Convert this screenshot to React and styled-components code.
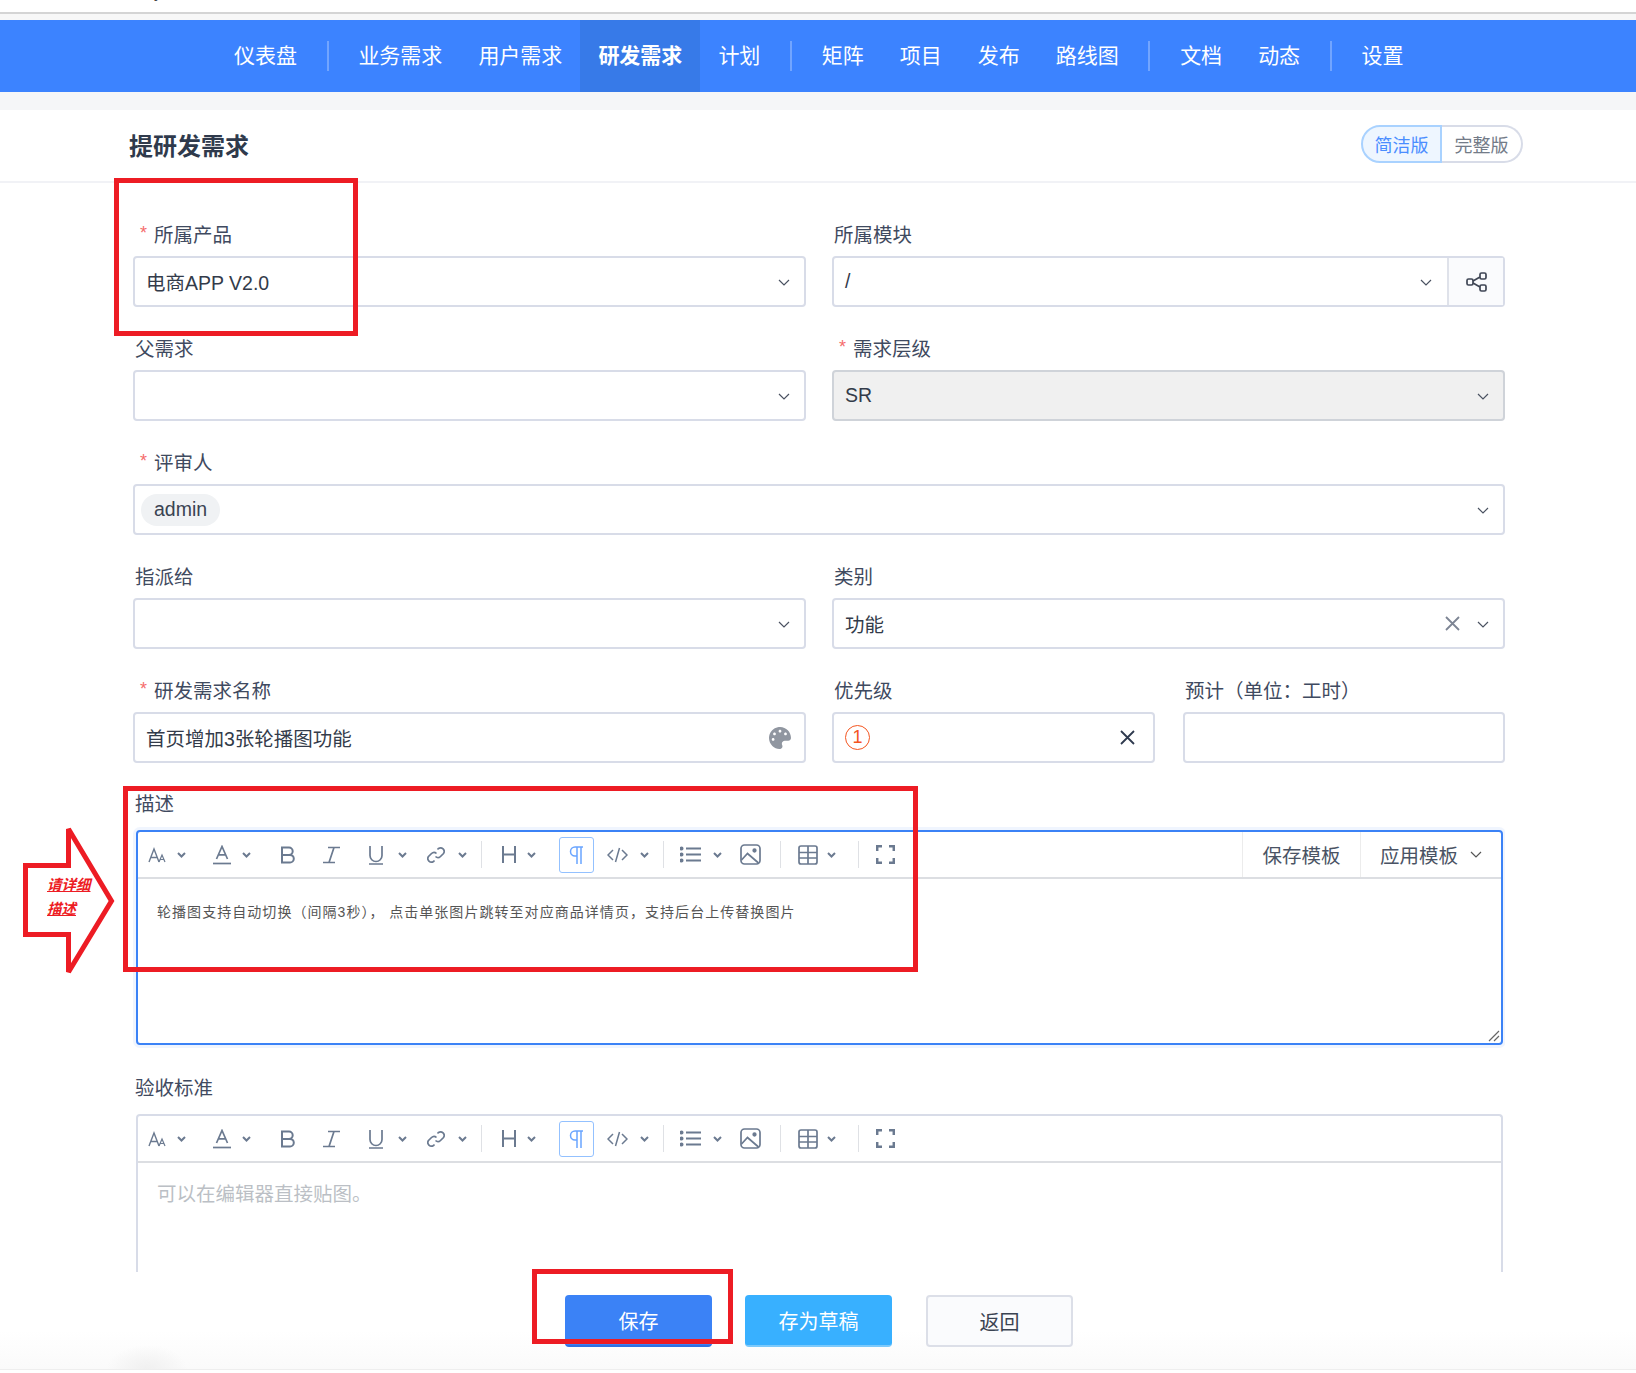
import styled, { createGlobalStyle } from "styled-components"
import { FaPalette } from "react-icons/fa"

const navItems = [
    { text: "仪表盘" },
    { divider: true },
    { text: "业务需求" },
    { text: "用户需求" },
    { text: "研发需求", active: true },
    { text: "计划" },
    { divider: true },
    { text: "矩阵" },
    { text: "项目" },
    { text: "发布" },
    { text: "路线图" },
    { divider: true },
    { text: "文档" },
    { text: "动态" },
    { divider: true },
    { text: "设置" },
]

const Svg = ({ w, h, children, ...rest }) => (
    <svg width={w} height={h} viewBox={`0 0 ${w} ${h}`} fill="none" stroke="currentColor" strokeWidth="1.7" {...rest}>
        {children}
    </svg>
)

const ChevronThin = () => (
    <Svg w={12} h={7} strokeWidth="1.2"><path d="M1 1l5 5 5-5" /></Svg>
)
const ChevronBold = ({ w = 9 }) => (
    <Svg w={w} h={6} strokeWidth="2"><path d={`M1 1l${w / 2 - 1} 3.5L${w - 1} 1`} /></Svg>
)
const FontSize = () => (
    <Svg w={18} h={16} strokeWidth="1.4">
        <path d="M1 15L6 2l5 13M2.800 10.500h6.500" />
        <path d="M11 15l3-7 3 7M12 12.500h4" strokeWidth="1.200" />
    </Svg>
)
const FontColor = () => (
    <Svg w={18} h={20}>
        <path d="M3.500 14L9 1.500 14.500 14M5.300 9.800h7.400" />
        <path d="M0 18.500h18" />
    </Svg>
)
const Bold = () => (
    <Svg w={16} h={18} strokeWidth="2">
        <path d="M2 1.500h7a3.700 3.700 0 0 1 0 7.400H2zM2 8.900h8a3.800 3.800 0 0 1 0 7.600H2z" />
    </Svg>
)
const Italic = () => (
    <Svg w={17} h={18}>
        <path d="M5 1.500h12M0 16.500h12M11 1.500L6 16.500" />
    </Svg>
)
const Underline = () => (
    <Svg w={14} h={20}>
        <path d="M1 1v9.500a6 6 0 0 0 12 0V1M0 19h14" />
    </Svg>
)
const LinkIcon = () => (
    <Svg w={18} h={18}>
        <path d="M10.500 3.500l1-1a3.600 3.600 0 0 1 5 5l-3 3a3.600 3.600 0 0 1-5 0" />
        <path d="M7.500 14.500l-1 1a3.600 3.600 0 0 1-5-5l3-3a3.600 3.600 0 0 1 5 0" />
    </Svg>
)
const Heading = () => (
    <Svg w={14} h={17} strokeWidth="2">
        <path d="M1 0v17M13 0v17M1 8.500h12" />
    </Svg>
)
const Pilcrow = () => (
    <Svg w={15} h={18} strokeWidth="1.500" stroke="#6aa5ff">
        <path d="M14 1H6a4.500 4.500 0 0 0 0 9h2M8 1v17M12 1v17" />
    </Svg>
)
const Code = () => (
    <Svg w={21} h={16} strokeWidth="1.500">
        <path d="M6 3L1 8l5 5M15 3l5 5-5 5M12.500 1L8.500 15" />
    </Svg>
)
const ListIcon = () => (
    <Svg w={21} h={17}>
        <path d="M6 2.500h15M6 8.500h15M6 14.500h15" strokeWidth="2" />
        <circle cx="1.500" cy="2.500" r="1.200" fill="currentColor" />
        <circle cx="1.500" cy="8.500" r="1.200" fill="currentColor" />
        <circle cx="1.500" cy="14.500" r="1.200" fill="currentColor" />
    </Svg>
)
const ImageIcon = () => (
    <Svg w={21} h={21}>
        <rect x="1" y="1" width="19" height="19" rx="3.500" />
        <path d="M1.500 16l6-6.500 11 9.500" />
        <circle cx="14.500" cy="6.500" r="1.300" fill="currentColor" />
    </Svg>
)
const TableIcon = () => (
    <Svg w={20} h={20}>
        <rect x="1" y="1" width="18" height="18" rx="2" />
        <path d="M1 7.500h18M1 13h18M10 1v18" />
    </Svg>
)
const FullScreen = () => (
    <Svg w={19} h={19} strokeWidth="2.500">
        <path d="M1.200 6V1.200H6M13 1.200h4.800V6M17.800 13v4.800H13M6 17.800H1.200V13" />
    </Svg>
)
const ShareNodes = () => (
    <Svg w={21} h={20} strokeWidth="1.700">
        <rect x="1" y="7" width="6" height="6" rx="1.500" />
        <rect x="14" y="1" width="6" height="6" rx="1.500" />
        <rect x="14" y="13" width="6" height="6" rx="1.500" />
        <path d="M7 9l7-4M7 11l7 4" />
    </Svg>
)
const Cross = ({ size = 15, weight = 1.800 }) => (
    <Svg w={size} h={size} strokeWidth={weight}>
        <path d={`M1 1l${size - 2} ${size - 2}M${size - 1} 1L1 ${size - 1}`} />
    </Svg>
)

const tools = [
    { icon: <FontSize />, gap: 10 },
    { icon: <ChevronBold />, gap: 11 },
    { icon: <FontColor />, gap: 27 },
    { icon: <ChevronBold />, gap: 11 },
    { icon: <Bold />, gap: 29 },
    { icon: <Italic />, gap: 27 },
    { icon: <Underline />, gap: 29 },
    { icon: <ChevronBold />, gap: 15 },
    { icon: <LinkIcon />, gap: 20 },
    { icon: <ChevronBold />, gap: 13 },
    { divider: true, gap: 14 },
    { icon: <Heading />, gap: 20 },
    { icon: <ChevronBold />, gap: 11 },
    { icon: <Pilcrow />, gap: 23, active: true },
    { icon: <Code />, gap: 13 },
    { icon: <ChevronBold />, gap: 12 },
    { divider: true, gap: 14 },
    { icon: <ListIcon />, gap: 16 },
    { icon: <ChevronBold />, gap: 12 },
    { icon: <ImageIcon />, gap: 18 },
    { divider: true, gap: 19 },
    { icon: <TableIcon />, gap: 17 },
    { icon: <ChevronBold />, gap: 9 },
    { divider: true, gap: 22 },
    { icon: <FullScreen />, gap: 17 },
]

function Toolbar({ children }) {
    return (
        <ToolbarRow>
            {tools.map((tool, i) =>
                tool.divider ? (
                    <ToolDivider key={i} $gap={tool.gap} />
                ) : tool.active ? (
                    <ParagraphButton key={i} $gap={tool.gap}>{tool.icon}</ParagraphButton>
                ) : (
                    <ToolIcon key={i} $gap={tool.gap}>{tool.icon}</ToolIcon>
                )
            )}
            {children}
        </ToolbarRow>
    )
}

function Field({ label, required, children }) {
    return (
        <div>
            <Label>
                {required && <Star>*</Star>}
                {label}
            </Label>
            {children}
        </div>
    )
}

function App() {
    return (
        <Page>
            <GlobalStyle />
            <TopStrip><TopText>y</TopText></TopStrip>
            <Nav>
                {navItems.map((item, i) =>
                    item.divider ? (
                        <NavDivider key={i} />
                    ) : (
                        <NavItem key={i} $active={item.active}>{item.text}</NavItem>
                    )
                )}
            </Nav>
            <Band />

            <Header>
                <Title>提研发需求</Title>
                <Toggle>
                    <ToggleOption $active>简洁版</ToggleOption>
                    <ToggleOption>完整版</ToggleOption>
                </Toggle>
            </Header>

            <Form>
                <Row>
                    <Field label="所属产品" required>
                        <Select>
                            <Value>电商APP V2.0</Value>
                            <Arrow><ChevronThin /></Arrow>
                        </Select>
                    </Field>
                    <Field label="所属模块">
                        <Select>
                            <Value>/</Value>
                            <Arrow $right={37}><ChevronThin /></Arrow>
                            <Addon><ShareNodes /></Addon>
                        </Select>
                    </Field>
                </Row>
                <Row>
                    <Field label="父需求">
                        <Select>
                            <Value />
                            <Arrow><ChevronThin /></Arrow>
                        </Select>
                    </Field>
                    <Field label="需求层级" required>
                        <Select $disabled>
                            <Value>SR</Value>
                            <Arrow><ChevronThin /></Arrow>
                        </Select>
                    </Field>
                </Row>
                <Field label="评审人" required>
                    <Select>
                        <Tag>admin</Tag>
                        <Value />
                        <Arrow><ChevronThin /></Arrow>
                    </Select>
                </Field>
                <Row>
                    <Field label="指派给">
                        <Select>
                            <Value />
                            <Arrow><ChevronThin /></Arrow>
                        </Select>
                    </Field>
                    <Field label="类别">
                        <Select>
                            <Value>功能</Value>
                            <ClearIcon $tone="#7d8594" $right={17}><Cross /></ClearIcon>
                            <Arrow><ChevronThin /></Arrow>
                        </Select>
                    </Field>
                </Row>
                <Row>
                    <Field label="研发需求名称" required>
                        <Select>
                            <Value>首页增加3张轮播图功能</Value>
                            <PaletteIcon><FaPalette /></PaletteIcon>
                        </Select>
                    </Field>
                    <SubRow>
                        <Field label="优先级">
                            <Select>
                                <Value><PriorityBadge>1</PriorityBadge></Value>
                                <ClearIcon $tone="#2f3a4f" $right={18}><Cross /></ClearIcon>
                            </Select>
                        </Field>
                        <Field label="预计（单位：工时）">
                            <Select />
                        </Field>
                    </SubRow>
                </Row>

                <EditorBlock $top={-1}>
                    <Label>描述</Label>
                    <Editor $focused $height={215}>
                        <Toolbar>
                            <TemplateArea>
                                <TemplateButton $width={118}>保存模板</TemplateButton>
                                <TemplateButton $width={141}>
                                    应用模板
                                    <ChevronThin />
                                </TemplateButton>
                            </TemplateArea>
                        </Toolbar>
                        <EditorBody>轮播图支持自动切换（间隔3秒），{"\u2005"}点击单张图片跳转至对应商品详情页，支持后台上传替换图片</EditorBody>
                        <ResizeHandle viewBox="0 0 12 12" width="12" height="12" stroke="#666" fill="none" strokeWidth="1.200">
                            <path d="M1 11L11 1M6 11l5-5" />
                        </ResizeHandle>
                    </Editor>
                </EditorBlock>

                <EditorBlock $top={1}>
                    <Label>验收标准</Label>
                    <Editor $height={158} $clipped>
                        <Toolbar />
                        <Placeholder>可以在编辑器直接贴图。</Placeholder>
                    </Editor>
                </EditorBlock>
            </Form>

            <Footer>
                <FooterButton $kind="primary">保存</FooterButton>
                <FooterButton $kind="draft">存为草稿</FooterButton>
                <FooterButton>返回</FooterButton>
            </Footer>

            <Outline $x={114} $y={178} $w={244} $h={158} />
            <Outline $x={123} $y={786} $w={795} $h={186} />
            <Outline $x={532} $y={1269} $w={201} $h={75} />
            <ArrowMark viewBox="0 0 100 150" width="100" height="150" fill="none" stroke="#ed1c24" strokeWidth="5" strokeMiterlimit="3">
                <path d="M5.500 40.500H48.500V4L91.500 76L48.500 147V109.500H5.500Z" />
            </ArrowMark>
            <ArrowNote>请详细<br />描述</ArrowNote>
        </Page>
    )
}

const GlobalStyle = createGlobalStyle`
    html, body {
        margin: 0;
        padding: 0;
        background: #fff;
    }
    * {
        box-sizing: border-box;
    }
`

const Page = styled.div`
    position: relative;
    width: 1636px;
    height: 1373px;
    overflow: hidden;
    background: #fff;
    font-family: "Liberation Sans", "Noto Sans CJK SC", sans-serif;
    color: #3a4457;
`

const TopStrip = styled.div`
    height: 20px;
    overflow: hidden;
    padding-left: 154px;
    background: linear-gradient(#fff 12px, #d4d4d4 12px, #d4d4d4 14px, #f7f7f7 14px);
`

const TopText = styled.div`
    margin-top: -16px;
    font-size: 16px;
    line-height: 18px;
    color: #444;
`

const Nav = styled.nav`
    height: 72px;
    padding-left: 216px;
    display: flex;
    align-items: center;
    background: #3c83ff;
`

const NavItem = styled.div`
    height: 100%;
    padding: 0 18px 4px;
    display: flex;
    align-items: center;
    font-size: 21px;
    color: #fff;
    font-weight: ${p => (p.$active ? 700 : 400)};
    background: ${p => (p.$active ? "#377ae8" : "transparent")};
`

const NavDivider = styled.div`
    width: 2px;
    height: 30px;
    margin: 0 11.700px;
    background: rgba(255, 255, 255, .28);
`

const Band = styled.div`
    height: 18px;
    background: #f5f6f8;
`

const Header = styled.div`
    height: 73px;
    padding: 0 113px 3px 129px;
    display: flex;
    align-items: center;
    justify-content: space-between;
    border-bottom: 2px solid #f1f2f6;
`

const Title = styled.h1`
    margin: 0;
    font-size: 24px;
    font-weight: 700;
    color: #2f3a4c;
`

const Toggle = styled.div`
    display: flex;
    height: 38px;
`

const ToggleOption = styled.div`
    width: 81px;
    display: flex;
    align-items: center;
    justify-content: center;
    font-size: 18px;
    color: ${p => (p.$active ? "#4a8dff" : "#737b88")};
    background: ${p => (p.$active ? "#eef6ff" : "#fff")};
    border: 2px solid ${p => (p.$active ? "#a9d2ff" : "#d8dce8")};
    border-left-width: ${p => (p.$active ? 2 : 0)}px;
    border-radius: ${p => (p.$active ? "19px 0 0 19px" : "0 19px 19px 0")};
`

const Form = styled.div`
    width: 1372px;
    height: 1090px;
    margin-left: 133px;
    padding-top: 38px;
    display: flex;
    flex-direction: column;
    gap: 28px;
    overflow: hidden;
`

const Row = styled.div`
    display: grid;
    grid-template-columns: 673px 673px;
    column-gap: 26px;
`

const SubRow = styled.div`
    display: grid;
    grid-template-columns: 323px 322px;
    column-gap: 28px;
`

const Label = styled.div`
    height: 28px;
    margin-bottom: 7px;
    padding: 0 0 4px 2px;
    display: flex;
    align-items: center;
    font-size: 19.500px;
    color: #3f4a60;
    white-space: nowrap;
`

const Star = styled.span`
    width: 19px;
    padding-left: 5px;
    font-size: 18px;
    color: #f56c6c;
`

const Select = styled.div`
    position: relative;
    height: 51px;
    padding-left: 11px;
    display: flex;
    align-items: center;
    border: 2px solid ${p => (p.$disabled ? "#cfd3d9" : "#d8dce8")};
    border-radius: 4px;
    background: ${p => (p.$disabled ? "#f0f0f0" : "#fff")};
`

const Value = styled.div`
    flex: 1;
    padding-bottom: 1px;
    font-size: 19.500px;
    color: #333b4a;
    white-space: nowrap;
`

const Arrow = styled.span`
    display: flex;
    margin-top: 2px;
    margin-right: ${p => p.$right || 14}px;
    color: #4a5261;
`

const Addon = styled.div`
    width: 56px;
    height: 100%;
    flex: none;
    display: flex;
    align-items: center;
    justify-content: center;
    border-left: 2px solid #dfe2ea;
    background: #fafbfd;
    color: #3f4655;
    margin-left: -22px;
`

const ClearIcon = styled.span`
    display: flex;
    margin-right: ${p => p.$right}px;
    color: ${p => p.$tone};
`

const PaletteIcon = styled.span`
    display: flex;
    margin-right: 13px;
    font-size: 22px;
    color: #9096a0;
`

const PriorityBadge = styled.span`
    width: 25px;
    height: 25px;
    display: flex;
    align-items: center;
    justify-content: center;
    border: 1.500px solid #f4551f;
    border-radius: 50%;
    font-size: 18px;
    color: #f4551f;
`

const Tag = styled.span`
    height: 32px;
    margin-left: -5px;
    padding: 0 13px;
    display: flex;
    align-items: center;
    border-radius: 16px;
    background: #f0f2f4;
    font-size: 19.500px;
    color: #3a4352;
`

const EditorBlock = styled.div`
    margin-top: ${p => p.$top}px;
`

const Editor = styled.div`
    position: relative;
    width: 1367px;
    height: ${p => p.$height}px;
    margin-top: 12px;
    margin-left: 3px;
    border: 2px solid ${p => (p.$focused ? "#3b82f6" : "#d8dce8")};
    border-bottom-width: ${p => (p.$clipped ? 0 : 2)}px;
    border-radius: ${p => (p.$clipped ? "4px 4px 0 0" : "4px")};
    box-shadow: ${p => (p.$focused ? "0 0 0 3px rgba(59, 130, 246, .08)" : "none")};
`

const ToolbarRow = styled.div`
    height: 47px;
    display: flex;
    align-items: center;
    border-bottom: 2px solid #dcdee2;
    color: #6b7a90;
`

const ToolIcon = styled.span`
    display: flex;
    flex: none;
    margin-left: ${p => p.$gap}px;
`

const ToolDivider = styled.span`
    width: 1px;
    height: 27px;
    flex: none;
    margin-left: ${p => p.$gap}px;
    background: #dfe1e5;
`

const ParagraphButton = styled(ToolIcon)`
    width: 35px;
    height: 36px;
    align-items: center;
    justify-content: center;
    border: 1.500px solid #93c1ff;
    border-radius: 3px;
`

const TemplateArea = styled.div`
    height: 100%;
    margin-left: auto;
    display: flex;
`

const TemplateButton = styled.div`
    width: ${p => p.$width}px;
    display: flex;
    align-items: center;
    justify-content: center;
    gap: 12px;
    border-left: 1px solid #ececec;
    font-size: 19.500px;
    color: #4a5364;
    svg {
        color: #555;
    }
`

const EditorBody = styled.div`
    padding: 22px 19px;
    font-size: 14px;
    line-height: 22px;
    letter-spacing: 1.050px;
    color: #555;
`

const Placeholder = styled.div`
    padding: 17px 19px;
    font-size: 19.500px;
    line-height: 28px;
    color: #bbbfc5;
`

const ResizeHandle = styled.svg`
    position: absolute;
    right: 1px;
    bottom: 1px;
`

const Footer = styled.div`
    height: 97px;
    padding: 22px 0 0 565px;
    display: flex;
    align-items: flex-start;
    gap: 33px;
    border-bottom: 1px solid #eee;
    background: radial-gradient(ellipse 40px 24px at 147px 100%, #f0f0f0, transparent), linear-gradient(#fff 60%, #fafafa);
`

const kinds = {
    primary: { bg: "#3b82f6", bottom: "#2f72e2", color: "#fff" },
    draft: { bg: "#38b0ff", bottom: "#7cc9fb", color: "#fff" },
}

const FooterButton = styled.div`
    width: 147px;
    height: 52px;
    display: flex;
    align-items: center;
    justify-content: center;
    border-radius: 4px;
    font-size: 20px;
    color: ${p => (kinds[p.$kind] ? kinds[p.$kind].color : "#3a4352")};
    background: ${p => (kinds[p.$kind] ? kinds[p.$kind].bg : "#fafbfd")};
    border: ${p => (kinds[p.$kind] ? "none" : "2px solid #dcdfe8")};
    border-bottom: 2px solid ${p => (kinds[p.$kind] ? kinds[p.$kind].bottom : "#dcdfe8")};
    &:last-child {
        margin-left: 1px;
    }
`

const Outline = styled.div`
    position: absolute;
    left: ${p => p.$x}px;
    top: ${p => p.$y}px;
    width: ${p => p.$w}px;
    height: ${p => p.$h}px;
    border: 5px solid #ed1c24;
    pointer-events: none;
`

const ArrowMark = styled.svg`
    position: absolute;
    left: 20px;
    top: 825px;
`

const ArrowNote = styled.div`
    position: absolute;
    left: 47px;
    top: 873px;
    font-size: 14.500px;
    line-height: 24px;
    font-weight: 700;
    font-style: italic;
    color: #ed1c24;
    text-decoration: underline;
`

export default App
